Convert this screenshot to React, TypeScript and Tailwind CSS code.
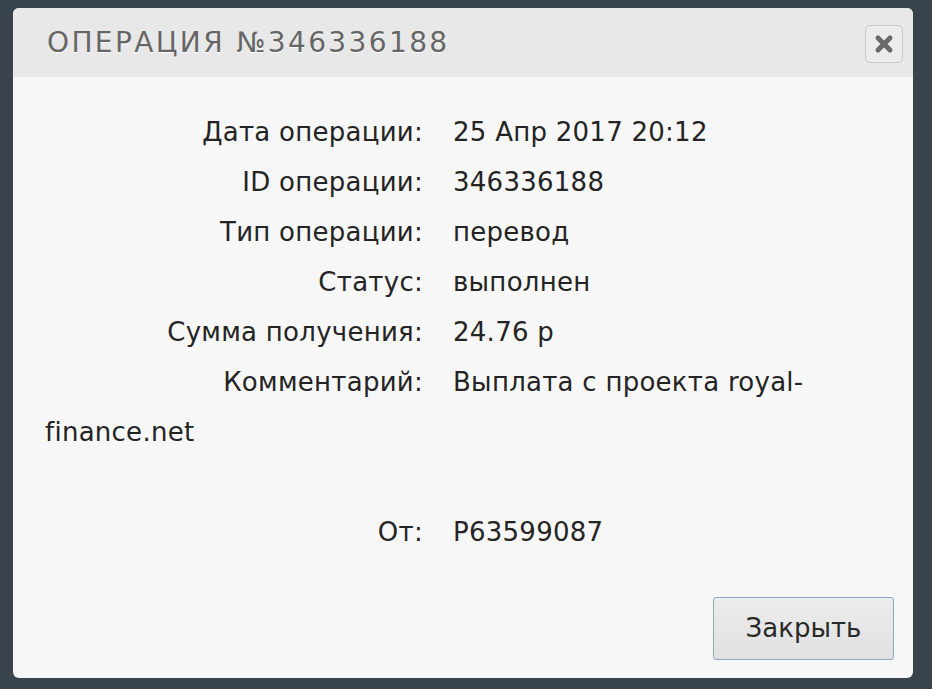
import React from 'react';

const rows: { label: string; value: string }[] = [
  { label: 'Дата операции:', value: '25 Апр 2017 20:12' },
  { label: 'ID операции:', value: '346336188' },
  { label: 'Тип операции:', value: 'перевод' },
  { label: 'Статус:', value: 'выполнен' },
  { label: 'Сумма получения:', value: '24.76 р' },
  { label: 'Комментарий:', value: 'Выплата с проекта royal-' },
];

function Row({ label, value }: { label: string; value: string }) {
  return (
    <div className="flex leading-[50px]">
      <span className="w-[378px] shrink-0 text-right mr-[30px]">{label}</span>
      <span>{value}</span>
    </div>
  );
}

export default function App() {
  return (
    <div className="w-[948px] h-[696px] bg-white">
      <div className="w-[932px] h-[689px] bg-[#39434b] pt-[8px] pl-[13px] pr-[19px] pb-[11px]">
        <div className="h-full flex flex-col rounded-[6px] overflow-hidden bg-[#f7f7f7]">
          <header className="h-[69px] shrink-0 flex items-center justify-between pl-[34px] pr-[10px] bg-[#e8e8e8]">
            <h1
              className="text-[28px] tracking-[0.085em] text-[#666] [text-shadow:0_1px_0_#fff]"
              style={{ fontFamily: '"DejaVu Sans", sans-serif' }}
            >
              ОПЕРАЦИЯ №346336188
            </h1>
            <button
              className="w-[38px] h-[38px] mt-[3px] flex items-center justify-center rounded-[5px] border border-[#c9c9c9] bg-[#ececec]"
              aria-label="Закрыть"
            >
              <svg width="22" height="22" viewBox="0 0 22 22">
                <path d="M5 5 L17 17 M17 5 L5 17" stroke="#6a6a6a" strokeWidth="5" strokeLinecap="round" />
              </svg>
            </button>
          </header>

          <div
            className="flex-1 pt-[30px] px-[32px] text-[26px] tracking-[0.01em] text-[#242424]"
            style={{ fontFamily: '"DejaVu Sans", sans-serif' }}
          >
            {rows.map((r) => (
              <Row key={r.label} label={r.label} value={r.value} />
            ))}
            {/* comment wraps onto the next line from the left edge */}
            <p className="leading-[50px]">finance.net</p>
            <p className="leading-[50px]">&nbsp;</p>
            <Row label="От:" value="P63599087" />
          </div>

          <div className="flex justify-end pr-[19px] pb-[18px]">
            <button
              className="w-[181px] h-[63px] rounded-[3px] border border-[#8ea6c6] bg-gradient-to-b from-[#ececec] to-[#e1e1e1] text-[26px] text-[#2a2a2a]"
              style={{ fontFamily: '"DejaVu Sans", sans-serif' }}
            >
              Закрыть
            </button>
          </div>
        </div>
      </div>
    </div>
  );
}
